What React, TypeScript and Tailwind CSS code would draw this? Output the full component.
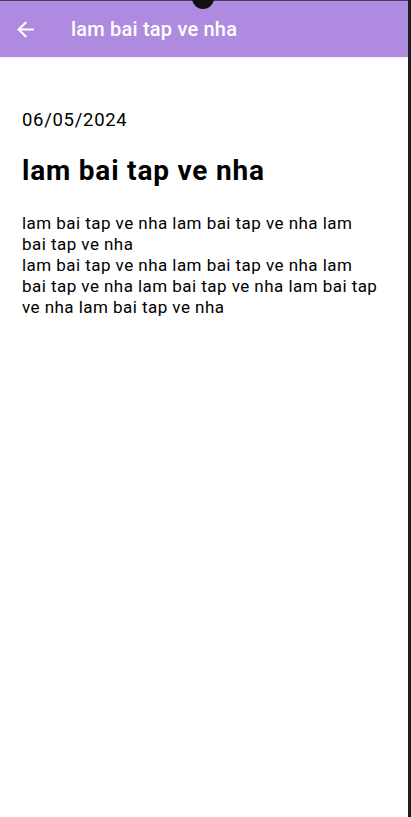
import React from "react";

const body =
  "lam bai tap ve nha lam bai tap ve nha lam bai tap ve nha\nlam bai tap ve nha lam bai tap ve nha lam bai tap ve nha lam bai tap ve nha lam bai tap ve nha lam bai tap ve nha";

export default function App() {
  return (
    <div className="relative flex h-[817px] w-[411px] overflow-hidden bg-white font-['Roboto',sans-serif]">
      <div className="flex min-w-0 flex-1 flex-col">
        {/* App bar */}
        <div className="h-px bg-[#4a3d5c]" />
        <div className="flex h-[56px] items-center bg-[#ae8ae0] shadow-[0_2px_2px_rgba(0,0,0,0.06)]">
          <svg className="ml-[13px] text-white" width="25" height="25" viewBox="0 0 24 24" fill="currentColor">
            <path d="M20 11H7.83l5.59-5.59L12 4l-8 8 8 8 1.41-1.41L7.83 13H20v-2z" />
          </svg>
          <h1 className="ml-[33px] text-[20px] font-medium tracking-[0.2px] text-white">lam bai tap ve nha</h1>
        </div>

        {/* Content */}
        <div className="pl-[22px] pr-[30px] pt-[50px] text-black">
          <p className="text-[18.5px] leading-[26px] tracking-[0.7px]">06/05/2024</p>
          <h2 className="mt-[20px] text-[28px] font-bold leading-[36px] tracking-[0.8px]">lam bai tap ve nha</h2>
          <p className="mt-[24px] whitespace-pre-line text-[17px] leading-[21px] tracking-[0.45px]">{body}</p>
        </div>
      </div>

      {/* device edge */}
      <div className="w-[3px] bg-[#1c1c1c]" />

      {/* camera cutout */}
      <div className="absolute left-[192px] top-[-13px] h-[22px] w-[22px] rounded-full bg-[#111]" />
    </div>
  );
}
